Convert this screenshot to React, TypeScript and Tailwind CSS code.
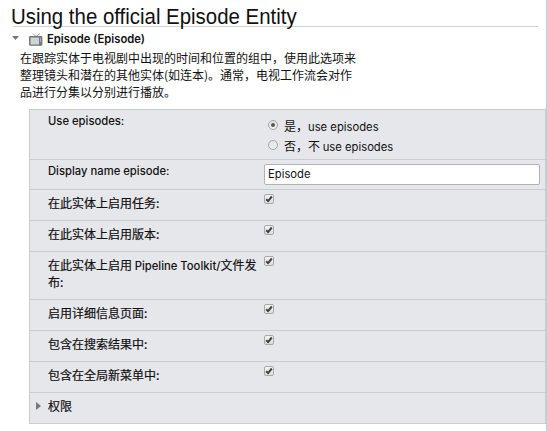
import type { ReactNode } from "react";

function L({ children, className = "" }: { children: ReactNode; className?: string }) {
  return <span className={`font-[Inter,sans-serif] text-[11.25px] leading-0 [-webkit-text-stroke:0] ${className}`}>{children}</span>;
}

function Check() {
  return (
    <span className="mt-1 flex h-[10px] w-[10px] shrink-0 items-center justify-center rounded-[2px] border border-[#a9a9ab] bg-linear-to-b from-[#f2f2f2] to-[#dedede]">
      <svg className="shrink-0" width="8" height="8" viewBox="0 0 8 8" fill="none">
        <path d="M1.2 4.2 3.1 6.1 6.8 1.5" stroke="#404040" strokeWidth="2" />
      </svg>
    </span>
  );
}

function Radio({ on = false }: { on?: boolean }) {
  return (
    <span className="flex h-[10px] w-[10px] items-center justify-center rounded-full border border-[#a5a5a7] bg-linear-to-b from-[#e4e4e4] to-[#f0f0f0]">
      {on && <span className="h-1 w-1 rounded-full bg-[#555]" />}
    </span>
  );
}

function Row({ label, height, latin = false, children }: { label: ReactNode; height: string; latin?: boolean; children?: ReactNode }) {
  return (
    <div className={`flex border-b border-[#cbccd0] ${height}`}>
      <div className={`w-[234px] shrink-0 pl-[18px] whitespace-nowrap [-webkit-text-stroke:0.2px_#111] ${latin ? "pt-px" : "pt-[4px]"}`}>{label}</div>
      {children}
    </div>
  );
}

export default function App() {
  return (
    <div className="h-[431px] w-[547px] overflow-hidden border-r border-[#c9cace] bg-white font-['Noto_Sans_CJK_SC',sans-serif] text-xs leading-[17px] text-[#111]">
      <div className="ml-[13px] h-[27px] w-[525px] border-b border-[#d2d2d2] pt-[5px]">
        <h1 className="-ml-[2px] origin-left scale-x-[0.928] font-['Liberation_Sans',Arial,sans-serif] text-[22px] leading-6 whitespace-nowrap text-[#111]">Using the official Episode Entity</h1>
      </div>
      <div className="flex h-[22px] pl-[12px]">
        <svg className="mt-[9px]" width="7" height="4" viewBox="0 0 7 4"><path d="M0 0h7L3.5 4Z" fill="#777" /></svg>
        <svg className="mt-[6px] ml-[10px]" width="14" height="13" viewBox="0 0 14 13">
          <path d="m4 .5 3 3 4-3" fill="none" stroke="#999" />
          <rect x=".6" y="3.6" width="12.2" height="8.6" rx=".6" fill="#737a7d" stroke="#777" strokeWidth="1.2" />
          <rect x="1.5" y="4.5" width="8.5" height="7" rx=".5" fill="#cdd4d8" />
          <path d="M11 6h1M11 8h1" stroke="#ddd" />
        </svg>
        <span className="mt-[2px] ml-[4px]"><L className="font-semibold">Episode (Episode)</L></span>
      </div>
      <p className="h-[60px] pl-5 whitespace-nowrap">
        在跟踪实体于电视剧中出现的时间和位置的组中，使用此选项来<br />
        整理镜头和潜在的其他实体(如连本)。通常，电视工作流会对作<br />
        品进行分集以分别进行播放。
      </p>
      <div className="ml-[29px] w-[517px] border-t border-r border-l border-[#cbccd0] bg-[#e6e7eb]">
        <Row latin height="h-[50px]" label={<L className="font-medium">Use episodes:</L>}>
          <div className="pt-[5px] pl-[4px]">
            <div className="flex h-5 items-center"><Radio on /><span className="ml-[6px]">是，<L>use episodes</L></span></div>
            <div className="flex h-5 items-center"><Radio /><span className="ml-[6px]">否，不 <L>use episodes</L></span></div>
          </div>
        </Row>
        <Row latin height="h-[30px]" label={<L className="font-medium">Display name episode:</L>}>
          <div className="mt-[4px] h-[21px] w-[276px] rounded-[2px] border border-[#b1b2b6] bg-white pl-[3px] leading-[15px]"><L>Episode</L></div>
        </Row>
        <Row height="h-[31px]" label="在此实体上启用任务:"><Check /></Row>
        <Row height="h-[31px]" label="在此实体上启用版本:"><Check /></Row>
        <Row height="h-[48px]" label={<>在此实体上启用 <L className="font-medium">Pipeline Toolkit/</L>文件发<br />布:</>}><Check /></Row>
        <Row height="h-[31px]" label="启用详细信息页面:"><Check /></Row>
        <Row height="h-[31px]" label="包含在搜索结果中:"><Check /></Row>
        <Row height="h-[31px]" label="包含在全局新菜单中:"><Check /></Row>
        <div className="flex h-[31px] border-b border-[#cbccd0] pt-[4px] pl-[6px]">
          <svg className="mt-[5px] mr-[7px]" width="5" height="8" viewBox="0 0 5 8"><path d="M0 0v8l5-4Z" fill="#777" /></svg>
          <span className="[-webkit-text-stroke:0.2px_#111]">权限</span>
        </div>
      </div>
    </div>
  );
}
